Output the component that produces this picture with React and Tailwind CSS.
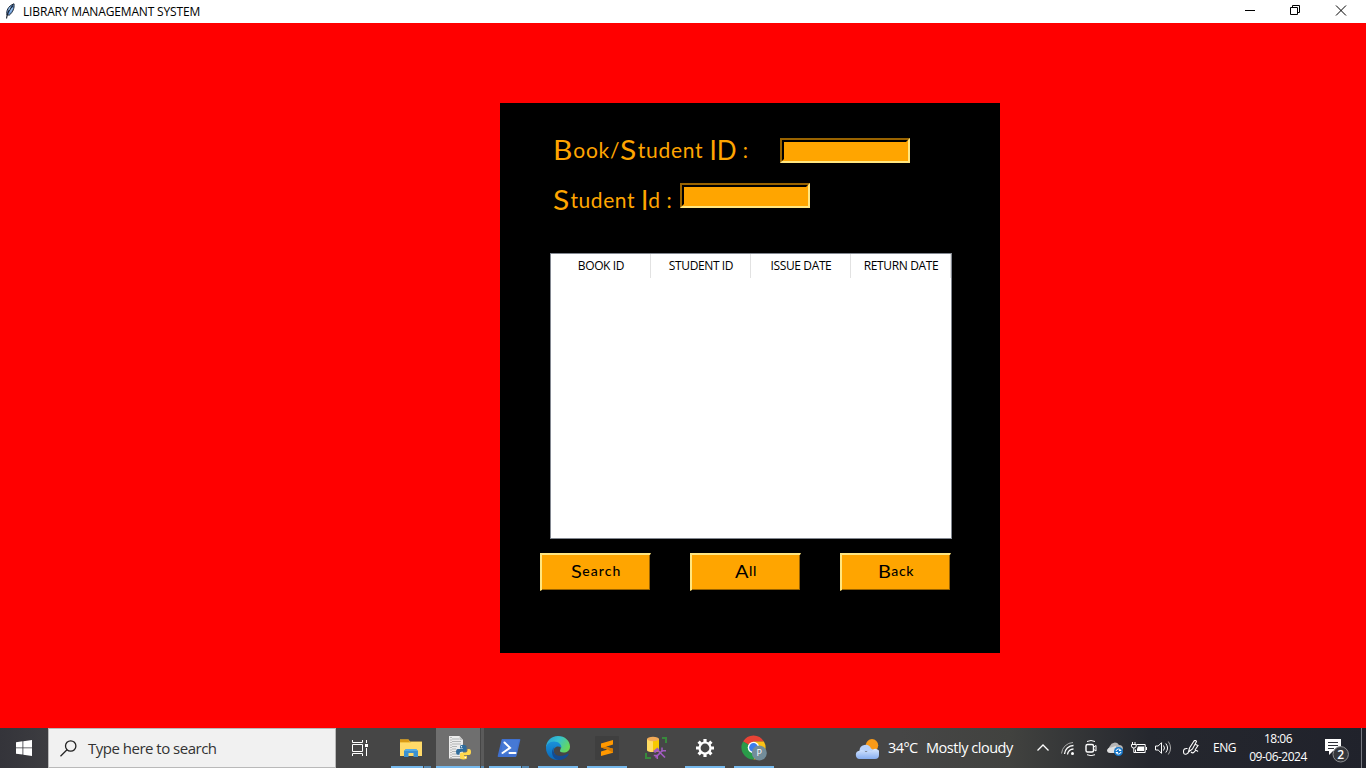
import React from "react";

const COLUMNS = ["BOOK ID", "STUDENT ID", "ISSUE DATE", "RETURN DATE"];

function Feather() {
  return (
    <svg className="block h-4 w-3" viewBox="0 0 12 16" fill="none">
      <path d="M3 12C2 8 4 3 10 .8C10.600 5 9 9 5.500 12Z" fill="#6a9bd8" stroke="#1b2533" strokeWidth="1" />
      <path d="M2.500 15.500C3 11 5.500 6 9 2.500" stroke="#17202c" strokeWidth="1.100" />
      <path d="M5 7l1.200-3M6.500 8.500L8.500 5" stroke="#b9d6f5" strokeWidth=".8" />
    </svg>
  );
}

function TitleBar() {
  return (
    <header className="flex h-[23px] bg-white text-black">
      <div className="w-[23px] pl-1 pt-[3px]"><Feather /></div>
      <span className="pt-px text-[12px] leading-[22px] tracking-[-0.160px] whitespace-nowrap">LIBRARY MANAGEMANT SYSTEM</span>
      <div className="mr-[2px] ml-auto flex h-[21px]">
        <svg className="w-[46px]" viewBox="0 0 46 21"><path d="M19 10.500H29" stroke="#000" /></svg>
        <svg className="w-[46px]" viewBox="0 0 46 21" fill="none" stroke="#000">
          <path d="M18.500 7.500h7v7h-7zM20.500 7.500v-2h7v7h-2" />
        </svg>
        <svg className="w-[46px]" viewBox="0 0 46 21"><path d="M18 5.500l10 10M28 5.500l-10 10" stroke="#000" /></svg>
      </div>
    </header>
  );
}

function Entry() {
  return (
    <div className="h-[25px] w-[130px] border-2 border-t-[#996300] border-l-[#996300] border-r-[#ffe680] border-b-[#ffe680] bg-[#ffa500]">
      <div className="h-full border-2 border-t-black border-l-black border-r-[#ffa500] border-b-[#ffa500]" />
    </div>
  );
}

/* Display lettering: tall capitals over small, widely spaced lowercase. */
function Cap({ children, wide }) {
  return (
    <span className={"relative top-[2px] inline-block origin-left text-[1.240em] leading-none font-normal tracking-normal " + (wide ? "mr-[0.130em] scale-x-[1.150]" : "")}>
      {children}
    </span>
  );
}

function Button({ children, className }) {
  return (
    <button className={"h-[38px] w-[111px] border-t-2 border-l-2 border-r border-b border-t-[#ffe680] border-l-[#ffe680] border-r-black border-b-black bg-[#ffa500] pb-1 font-['Lato'] text-[14px] leading-[30px] font-medium text-black shadow-[inset_-1px_-1px_0_#996300] whitespace-nowrap " + className}>
      {children}
    </button>
  );
}

function FieldLabel({ children, className }) {
  return (
    <label className={"ml-[53px] h-[25px] font-['Lato'] text-[21px] leading-[25px] whitespace-nowrap text-[#ffa500] " + className}>
      {children}
    </label>
  );
}

function BookPanel() {
  return (
    <section className="ml-[500px] h-[550px] w-[500px] bg-black">
      <div className="flex h-[60px] items-start pt-[35px]">
        <FieldLabel className="-mt-[3px] w-[227px] tracking-[0.750px]">
          <Cap wide>B</Cap>ook/<Cap wide>S</Cap>tudent <Cap>ID</Cap> :
        </FieldLabel>
        <Entry />
      </div>
      <div className="flex h-[50px] items-start pt-5">
        <FieldLabel className="mt-[2px] w-[127px] tracking-[0.550px]">
          <Cap wide>S</Cap>tudent <Cap>I</Cap>d :
        </FieldLabel>
        <Entry />
      </div>
      <div className="mt-10 ml-[50px] h-[286px] w-[402px] border border-[#828790] bg-white">
        <div className="flex h-6">
          {COLUMNS.map((c) => (
            <div key={c} className="w-[100px] border-r border-[#e2e2e2] pl-px text-center text-[12px] leading-[23px] tracking-[-0.380px] whitespace-nowrap text-black">{c}</div>
          ))}
        </div>
      </div>
      <div className="mt-[14px] ml-10 flex gap-[39px]">
        <Button className="tracking-[1.050px]"><Cap wide>S</Cap>earch</Button>
        <Button className="tracking-[0.700px]"><Cap wide>A</Cap>ll</Button>
        <Button className="tracking-[0.700px]"><Cap wide>B</Cap>ack</Button>
      </div>
    </section>
  );
}

function Task({ children, running, stacked, active }) {
  return (
    <div className="mr-px flex h-10 w-12 flex-col">
      <div className="flex h-[38px]">
        <div className={"flex h-[38px] items-center justify-center pt-px " + (active ? "w-11 bg-[#6f6f6f] pl-1" : "w-12")}>{children}</div>
        {active && <div className="ml-px h-10 w-[3px] bg-[#5a5a5a]" />}
      </div>
      <div className={"flex h-[2px] " + (active ? "" : "px-1")}>
        {running && <div className={active ? "w-11 bg-[#76b9ed]" : stacked ? "w-8 bg-[#76b9ed]" : "w-10 bg-[#76b9ed]"} />}
        {stacked && <div className={active ? "ml-px w-[3px] bg-[#5689b2]" : "ml-px w-[7px] bg-[#5689b2]"} />}
      </div>
    </div>
  );
}

function Explorer() {
  return (
    <svg className="h-6 w-6" viewBox="0 0 24 24">
      <path d="M1 3.500h8.500l1.500 2h12V20H1z" fill="#f4c443" />
      <path d="M1 3.500h8.500l1 2.500H1z" fill="#d99a16" />
      <path d="M1 7h10l1.500-1H23v14H1z" fill="#ffda69" />
      <path d="M5 21v-6l2-2h10l2 2v6h-4.500v-4h-5v4z" fill="#3c91d1" />
      <path d="M7 13h10l2 2H5z" fill="#55abe4" />
    </svg>
  );
}

function PythonFile() {
  return (
    <svg className="h-6 w-6" viewBox="0 0 24 24">
      <path d="M1 0h10.500L15 4v18.500H1z" fill="#ececec" />
      <path d="M11.500 0v4H15z" fill="#c4c4c4" />
      <path d="M4 3h7M4 5.500h9M4 8h9M4 10.500h5M4 13h4M4 15.500h5M4 18h5M4 20.500h8" stroke="#a4a8aa" strokeWidth=".8" />
      <path d="M3 1v21" stroke="#888" strokeDasharray="1 1.500" />
      <path d="M12 10.500q0-1.800 3-1.800t3.500 1.500V14q0 1.800-1.500 1.800H13.500q-2 0-2 2v1H9.500Q8 18.500 8 15.800T9.500 13H15V12.500h-3z" fill="#2f6c9c" />
      <path d="M19.500 13h1.500q2 0 2 3t-2 3h-5v.8h3v2q0 1.700-3.500 1.700t-3.500-1.700V18q0-1.500 1.500-1.500H17.500q2 0 2-2z" fill="#ffd84d" />
      <circle cx="13.500" cy="10.700" r=".7" fill="#fff" /><circle cx="17.300" cy="21.500" r=".7" fill="#fff" />
    </svg>
  );
}

function PowerShell() {
  return (
    <svg className="h-6 w-6" viewBox="0 0 24 24">
      <path d="M5.300 3H22.500q1 0 .8 1L19.500 20q-.3 1-1.300 1H1.500q-1 0-.8-1L4.500 4q.200-1 .8-1z" fill="#3f70cf" />
      <path d="M6 4h16l-3 12L4 19z" fill="#4d82dc" opacity=".5" />
      <path d="M7.500 6.500l5.500 5.300L5.500 17M12.500 17h6" fill="none" stroke="#fff" strokeWidth="2" strokeLinecap="round" />
    </svg>
  );
}

function Edge() {
  return (
    <svg className="h-6 w-6" viewBox="0 0 24 24">
      <defs>
        <linearGradient id="eg" x1="0" y1="0" x2="1" y2=".5"><stop stopColor="#259bd8" /><stop offset=".5" stopColor="#35c1cf" /><stop offset="1" stopColor="#65d85d" /></linearGradient>
        <linearGradient id="eb" x1="0" y1="0" x2="0" y2="1"><stop stopColor="#1b91d8" /><stop offset="1" stopColor="#0867b9" /></linearGradient>
      </defs>
      <path d="M0 12C0 5 5 0 12 0s12 5 12 10.500c0 4-3 6-6.500 6-3 0-4.200-1-3.300-2.400C16.500 10 13 7.300 9 7.300 5 7.300 1 9 0 12z" fill="url(#eg)" />
      <path d="M0 12C0 8.500 3.500 5.500 8 5.500c4.500 0 7.500 3 7.500 6.200-4-3-8.500-.5-7.600 4.300.8 4.500 5.500 6.500 9.600 5.500-1.800 1.600-3.500 2.500-6 2.500C5 24 0 18.500 0 12z" fill="url(#eb)" />
      <path d="M8.500 10.500c-3 4.500.5 9.500 5.500 9.500 3.500 0 6-1.300 7.500-2.300.8-.5 1.400.200.9 1-2.400 4-6.700 5.300-10 5.300C7 23.500 3.500 16 8.500 10.500z" fill="#154b91" />
    </svg>
  );
}

function Sublime() {
  return (
    <svg className="h-6 w-6" viewBox="0 0 24 24">
      <rect width="24" height="24" rx="1" fill="#3f3f3f" />
      <path d="M6 7.500L18 4v4.500l-7 2.200 7 2v4L6 20v-4.500l6.500-2L6 11.500z" fill="#ff9800" />
      <path d="M6 11.500l5-.8 7 2v4l-5.500-3.200z" fill="#d97c00" />
    </svg>
  );
}

function DatabaseTools() {
  return (
    <svg className="h-6 w-6" viewBox="0 0 24 24" fill="none">
      <path d="M3 3v11q0 2 6 2t6-2V3z" fill="#ffdc62" /><path d="M9 5v11q6 0 6-2V3z" fill="#f8c900" />
      <ellipse cx="9" cy="3" rx="6" ry="2.200" fill="#f2aa57" />
      <path d="M18 2h4v5M2 17v5h5" stroke="#388a3c" strokeWidth="2" />
      <path d="M9 15l4.500-3.500 2 2.500L11 17z" fill="#a35cc2" />
      <path d="M13.500 14l7.500 7.500M11.500 21.500l7-7" stroke="#a35cc2" strokeWidth="1.700" />
      <path d="M18 11.500v3.200h4M9.800 19.500h3.500v3.500" stroke="#a35cc2" strokeWidth="1.500" />
    </svg>
  );
}

function Gear() {
  return (
    <svg className="h-5 w-5" viewBox="0 0 20 20" fill="none" stroke="#fff">
      <circle cx="10" cy="10" r="5.500" strokeWidth="2.200" />
      <path strokeWidth="3.200" d="M10 1v3M10 16v3M1 10h3M16 10h3M3.600 3.600l2.200 2.200M14.200 14.200l2.200 2.200M3.600 16.400l2.200-2.200M14.200 5.800l2.200-2.200" />
    </svg>
  );
}

function Chrome() {
  return (
    <svg className="h-[26px] w-[26px]" viewBox="0 0 26 26">
      <path d="M12.500 12.500L2.100 6.500A12 12 0 0 1 22.900 6.500H12.500z" fill="#e94335" />
      <path d="M12.500 12.500L2.100 6.500A12 12 0 0 0 12.500 24.500l5-8.700z" fill="#2a9b49" />
      <path d="M12.500 6.500h10.400A12 12 0 0 1 12.500 24.500l5.200-9z" fill="#fbc116" />
      <circle cx="12.500" cy="12.500" r="5.800" fill="#fff" /><circle cx="12.500" cy="12.500" r="4.400" fill="#3c7ded" />
      <circle cx="18.300" cy="18" r="7.500" fill="#738d9a" />
      <text x="18.300" y="21.300" textAnchor="middle" fill="#fff" fontSize="9" fontFamily="Open Sans, sans-serif">P</text>
    </svg>
  );
}

function Weather() {
  return (
    <svg className="mt-[2px] h-5 w-6" viewBox="0 0 24 20">
      <defs><linearGradient id="cloud" x1="0" y1="0" x2="0" y2="1"><stop stopColor="#d7e7ff" /><stop offset="1" stopColor="#86adf0" /></linearGradient></defs>
      <circle cx="17" cy="6.300" r="6.200" fill="#f99a18" />
      <path d="M4.500 12a6 6 0 0 1 11.500-2.500a4.500 4.500 0 0 1 3 3z" fill="#b7d1fb" />
      <path d="M4.500 20a4.200 4.200 0 0 1-.200-8.300Q8 10 11 13q2.500-2.500 6-1a4 4 0 0 1 7 4q0 4-4 4z" fill="url(#cloud)" />
    </svg>
  );
}

function TrayIcon({ children, className }) {
  return <svg className={"block h-4 w-4 " + className} viewBox="0 0 16 16" fill="none" stroke="#fff" strokeWidth="1">{children}</svg>;
}

function Taskbar() {
  return (
    <footer className="flex h-10 items-center bg-[linear-gradient(90deg,#34343a_0px,#3c3c40_48px,#464646_337px,#464646_900px,#41423f_1010px,#25272e_1150px,#20222b_1366px)] text-white">
      <div className="flex w-12 justify-center">
        <svg className="h-4 w-4" viewBox="0 0 16 16" fill="#fff"><path d="M0 2.200L6.500 1.300V7.500H0zM7.300 1.200L16 0v7.500H7.300zM0 8.300h6.500v6.300L0 13.700zM7.300 8.300H16V16l-8.700-1.300z" /></svg>
      </div>
      <div className="flex h-10 w-[288px] items-center border border-[#b9b9b9] bg-[#f1f1f1]">
        <svg className="ml-[11px] h-[17px] w-[17px]" viewBox="0 0 17 17" fill="none" stroke="#222" strokeWidth="1.300"><circle cx="10.700" cy="6" r="5.200" /><path d="M7 9.700L.5 16.200" /></svg>
        <span className="ml-[11px] text-[15px] tracking-[-0.500px] text-[#333] whitespace-nowrap">Type here to search</span>
      </div>
      <div className="mr-[3px] flex w-12 justify-center">
        <svg className="h-4 w-4" viewBox="0 0 16 16" fill="none" stroke="#fff">
          <path d="M.5 0v2.500h10V0M.5 16v-2.500h10V16M.5 4.500h10v7H.5zM14.500 0v3M14.500 8v8" /><path d="M13 4h3v3h-3z" fill="#fff" stroke="none" />
        </svg>
      </div>
      <nav className="flex">
        <Task running stacked><Explorer /></Task>
        <Task running stacked active><PythonFile /></Task>
        <Task running stacked><PowerShell /></Task>
        <Task running><Edge /></Task>
        <Task running><Sublime /></Task>
        <Task><DatabaseTools /></Task>
        <Task running><Gear /></Task>
        <Task running><Chrome /></Task>
      </nav>
      <div className="ml-auto flex h-10 w-[511px] items-center">
        <Weather />
        <span className="ml-[9px] w-[38px] text-[14.500px] tracking-[-0.600px] whitespace-nowrap">34°C</span>
        <span className="w-[109px] text-[14.500px] tracking-[-0.470px] whitespace-nowrap">Mostly cloudy</span>
        <TrayIcon className="mr-[9px]"><path d="M2.500 10.500L8 5l5.500 5.500" strokeWidth="1.300" /></TrayIcon>
        <TrayIcon className="mr-[7px]">
          <path d="M1.500 13.500A12 12 0 0 1 13 2.500" stroke="#aaa" /><path d="M4.500 14A9 9 0 0 1 13.500 5.500M7.500 14.500A6 6 0 0 1 13.500 9" strokeWidth="1.300" /><circle cx="12.500" cy="13.500" r="1.500" fill="#fff" stroke="none" />
        </TrayIcon>
        <TrayIcon className="mr-2">
          <rect x="3" y="4.500" width="7.500" height="7.500" rx="1.500" strokeWidth="1.400" /><path d="M10.500 7.200l2.500-1.700v5.500l-2.500-1.700M4 1.500Q8-.5 12 1.500M4 14.700q4 2 8 0" />
        </TrayIcon>
        <TrayIcon className="mr-2">
          <g stroke="none"><path d="M4 12a3.500 3.500 0 0 1-1-6A5 5 0 0 1 12 5q4 0 4 4l-3 3z" fill="#b5b5b5" /><path d="M0 10q1-3 4-2.500L9 6l-1 7H3Q0 13 0 10z" fill="#e0e0e0" /><circle cx="11.500" cy="11.500" r="4.500" fill="#1778ca" /></g>
          <path d="M9 11q.5-2 2.500-2t2.500 1.500h-2M14 12q-.5 2-2.500 2T9 12.500h2" />
        </TrayIcon>
        <TrayIcon className="mr-2">
          <path d="M5.500 4.500h8.700v8h-9.700v-3M15.500 7v3" /><path d="M7 6.500h6v4.500H6V9z" fill="#fff" stroke="none" /><path d="M1.500 2v2.500M4 2v2.500M.5 4.500h4.700v1.500Q5.200 8 2.800 8T.5 6zM2.800 8v4.500h2" />
        </TrayIcon>
        <TrayIcon className="mr-3">
          <path d="M.5 6h2.700l3.300-3.300v10.600L3.200 10H.5zM8.500 5.500q2 2.500 0 5M10.800 3.500q3.500 4.500 0 9" /><path d="M13.300 1.500q4.500 6.500 0 13" stroke="#aaa" />
        </TrayIcon>
        <TrayIcon className="mr-[14px]">
          <path d="M4.500 8.500q-4-.5-4 3Q.5 15 3.500 14q2-.5 2-2.500M5.500 12L6.500 8 11 1q1.500-1.500 2.500.5L9.500 9 5.500 12M12.500 4.500l2.500 1-3 4.500M8 12q2 2 3.500-.5 1.500-2 3.500 0" strokeWidth="1.100" />
        </TrayIcon>
        <span className="w-[30px] text-[12px] tracking-[-0.450px]">ENG</span>
        <div className="w-[70px] text-center text-[12px] leading-[18px] tracking-[-0.500px] whitespace-nowrap"><div>18:06</div><div>09-06-2024</div></div>
        <svg className="mt-2 ml-3 h-[26px] w-[26px]" viewBox="0 0 26 26" fill="none">
          <path d="M0 0h16v12h-8l-4 4v-4H0z" fill="#fff" /><path d="M3 3.500h10M3 6.500h10M3 9.500h6" stroke="#30323a" />
          <circle cx="15.700" cy="15.300" r="7.700" fill="#35373c" stroke="#8c8e91" /><text x="15.700" y="19.500" fill="#fff" fontSize="12" fontWeight="600" textAnchor="middle" fontFamily="Open Sans, sans-serif">2</text>
        </svg>
        <div className="mr-1 ml-auto h-10 w-px bg-[#777981]" />
      </div>
    </footer>
  );
}

export default function App() {
  return (
    <div className="flex h-screen min-h-[768px] w-[1366px] flex-col overflow-hidden bg-[#ff0000] font-['Open_Sans','Noto_Sans',sans-serif]">
      <TitleBar />
      <main className="flex-1 pt-20"><BookPanel /></main>
      <Taskbar />
    </div>
  );
}
